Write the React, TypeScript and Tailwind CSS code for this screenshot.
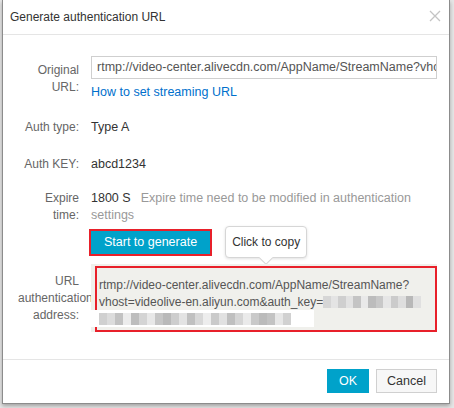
import type { FC } from 'react';

// tonos para el bloque "pixelado" que oculta la clave
const blurA = ['#d6d6d6', '#e4e4e4', '#cfcfcf', '#e2e2e2', '#c4c4c4', '#e9e9e9', '#bcbcbc', '#c8c8c8', '#e6e6e6', '#cbcbcb', '#dedede', '#b8b8b8', '#e0e0e0'];
const blurB = ['#d0d0d0', '#dcdcdc', '#c2c2c2', '#ececec', '#bdbdbd', '#d4d4d4', '#e8e8e8', '#c6c6c6', '#b9b9b9', '#cdcdcd', '#e3e3e3', '#c0c0c0', '#d8d8d8', '#ededed', '#cacaca', '#e1e1e1', '#bfbfbf', '#d5d5d5', '#eaeaea', '#c9c9c9', '#bbbbbb', '#c3c3c3', '#e7e7e7', '#d1d1d1'];

const Pixels: FC<{ tones: string[]; w: number }> = ({ tones, w }) => (
    <span className="inline-flex align-middle">
        {tones.map((c, i) => (
            <span key={i} className="block h-[12px]" style={{ width: w, backgroundColor: c }} />
        ))}
    </span>
);

const Row: FC<{ label: React.ReactNode; className?: string; labelClass?: string; children: React.ReactNode }> = ({
    label,
    className = '',
    labelClass = '',
    children,
}) => (
    <div className={`flex gap-[12px] ${className}`}>
        <div className={`w-[61px] shrink-0 text-right text-[#666] leading-[17px] ${labelClass}`}>{label}</div>
        <div className="relative flex-1 min-w-0">{children}</div>
    </div>
);

export default function App() {
    return (
        <div
            className="w-[454px] h-[408px] bg-[#e6e6e6] overflow-hidden text-[12px]"
            style={{ fontFamily: '"Liberation Sans", Arial, sans-serif' }}
        >
            <div className="ml-[2px] w-[448px] h-[404px] bg-white border-x border-b border-[#8c8c8c] shadow-[0_2px_4px_rgba(0,0,0,0.3)] flex flex-col">
                {/* Cabecera */}
                <div className="h-[35px] flex items-center justify-between pl-[7px] pr-[8px] border-b border-[#e5e5e5]">
                    <span className="text-[#333]">Generate authentication URL</span>
                    <svg width="12" height="12" viewBox="0 0 12 12" className="mt-[-2px]">
                        <path d="M1 1L11 11M11 1L1 11" stroke="#c4c4c4" strokeWidth="1.3" />
                    </svg>
                </div>

                {/* Cuerpo */}
                <div className="flex-1 pl-[15px] pr-[12px] pt-[21px]">
                    <Row label={<>Original<br />URL:</>} labelClass="pt-[6px]">
                        <div className="h-[23px] border border-[#cfcfcf] flex items-center pl-[5px] overflow-hidden whitespace-nowrap text-[#555] text-[12.5px]">
                            rtmp://video-center.alivecdn.com/AppName/StreamName?vhost=videolive-en.aliyun.com
                        </div>
                        <div className="mt-[5px] leading-[17px] text-[#0070cc] text-[12.5px]">How to set streaming URL</div>
                    </Row>

                    <Row label="Auth type:" className="mt-[18px]">
                        <div className="leading-[17px] text-[#333] text-[12.5px]">Type A</div>
                    </Row>

                    <Row label="Auth KEY:" className="mt-[20px]">
                        <div className="leading-[17px] text-[#333] text-[12.5px]">abcd1234</div>
                    </Row>

                    <Row label={<>Expire<br />time:</>} className="mt-[17px]">
                        <div className="leading-[17px] text-[#999] text-[12.5px]">
                            <span className="text-[#333] mr-[10px]">1800 S</span>
                            Expire time need to be modified in authentication settings
                        </div>
                    </Row>

                    <Row label="" className="mt-[5px]">
                        <div className="flex items-start">
                            <button
                                type="button"
                                className="-ml-[2px] h-[27px] px-[13px] border-2 border-[#e8202a] bg-[#00a2ca] text-white text-[12.5px]"
                            >
                                Start to generate
                            </button>
                            {/* Tooltip */}
                            <div className="relative ml-[13px] -mt-[3px] h-[32px] px-[6px] flex items-center bg-white border border-[#d6d6d6] rounded-[4px] shadow-[0_1px_3px_rgba(0,0,0,0.12)] text-[#333]">
                                Click to copy
                                <span className="absolute left-1/2 -bottom-[6px] -ml-[5px] w-[10px] h-[10px] bg-white border-r border-b border-[#d6d6d6] rotate-45" />
                            </div>
                        </div>
                    </Row>

                    <Row
                        label={<>URL<br />authentication<br />address:</>}
                        className="mt-[6px]"
                        labelClass="pt-[9px] leading-[16.5px]"
                    >
                        <div className="relative z-10 bg-[#f0f0ec] pl-[4px] pt-[2px]">
                            <div className="border-2 border-[#e8202a] pl-[2px] pt-[9px] pb-[3px] leading-[16.5px] text-[#555]">
                                <div>rtmp://video-center.alivecdn.com/AppName/StreamName?</div>
                                <div className="flex items-center whitespace-nowrap">
                                    vhost=videolive-en.aliyun.com&amp;auth_key=
                                    <Pixels tones={blurA} w={7.5} />
                                </div>
                                <div className="-ml-[8px] w-[223px] h-[17px] bg-white flex items-center pl-[8px]">
                                    <Pixels tones={blurB} w={8} />
                                </div>
                            </div>
                        </div>
                    </Row>
                </div>

                {/* Pie */}
                <div className="h-[44px] border-t border-[#e5e5e5] flex items-start justify-end gap-[7px] pt-[9px] pr-[12px]">
                    <button type="button" className="h-[24px] w-[42px] bg-[#00a2ca] text-white text-[12.5px]">
                        OK
                    </button>
                    <button type="button" className="h-[24px] w-[61px] bg-[#f7f7f7] border border-[#d0d0d0] text-[#333] text-[12.5px]">
                        Cancel
                    </button>
                </div>
            </div>
        </div>
    );
}
